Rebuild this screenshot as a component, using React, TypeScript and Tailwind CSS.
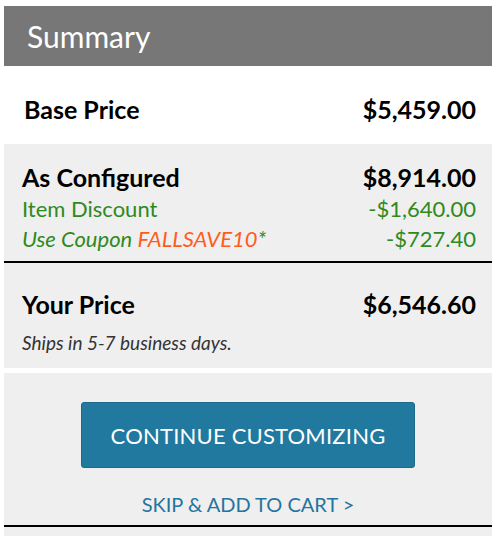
const GREEN = 'text-[#2e8a1e]'

function Row({ label, value, className }: { label: React.ReactNode; value: string; className?: string }) {
  return (
    <div className={`flex items-baseline justify-between ${className ?? ''}`}>
      <span>{label}</span>
      <span>{value}</span>
    </div>
  )
}

export default function App() {
  return (
    <div className="bg-white w-[500px] h-[536px] pt-[6px] pl-[4px] font-['Lato',sans-serif] overflow-hidden">
      <div className="w-[488px]">
        <div className="h-[60px] bg-[#777777] flex items-center px-[23px]">
          <h2 className="text-white text-[30px] leading-none">Summary</h2>
        </div>

        <div className="h-[78px] bg-white flex flex-col justify-center pl-[20px] pr-[16px] pt-[10px]">
          <Row label="Base Price" value="$5,459.00" className="text-[25px] font-bold text-black" />
        </div>

        <div className="h-[119px] bg-[#efefef] pl-[18px] pr-[16px] pt-[16px] border-b-2 border-black">
          <Row label="As Configured" value="$8,914.00" className="text-[25px] font-bold text-black leading-[34px]" />
          <Row label="Item Discount" value="-$1,640.00" className={`text-[22px] leading-[30px] ${GREEN}`} />
          <Row
            label={
              <span className="italic">
                Use Coupon <span className="text-[#ff5c1a]">FALLSAVE10</span>*
              </span>
            }
            value="-$727.40"
            className={`text-[22px] leading-[29px] ${GREEN}`}
          />
        </div>

        <div className="h-[105px] bg-[#efefef] pl-[18px] pr-[16px] pt-[24px]">
          <Row label="Your Price" value="$6,546.60" className="text-[25px] font-bold text-black leading-[34px]" />
          <p className="italic text-[19px] text-[#333] mt-[8px]">Ships in 5-7 business days.</p>
        </div>

        <div className="h-[5px] bg-white" />

        <div className="h-[154px] bg-[#efefef] border-b-2 border-black flex flex-col items-center pt-[29px]">
          <button className="w-[334px] h-[66px] bg-[#21799f] border border-[#1b6a8c] rounded-[3px] text-white text-[22px] tracking-[0.2px]">
            CONTINUE CUSTOMIZING
          </button>
          <a className="mt-[21px] text-[#2474a0] text-[20px]">SKIP &amp; ADD TO CART &gt;</a>
        </div>
        <div className="h-[20px] bg-[#efefef]" />
      </div>
    </div>
  )
}
